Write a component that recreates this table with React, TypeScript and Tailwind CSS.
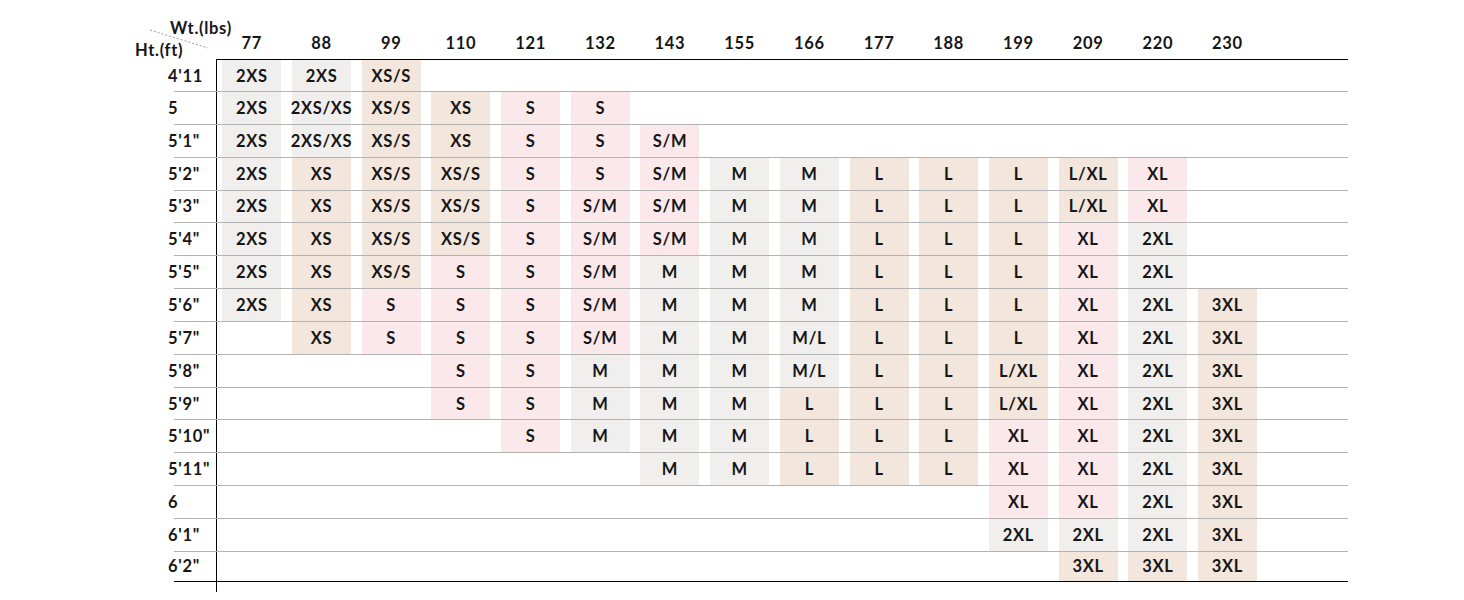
import React from 'react';

const weights = ['77', '88', '99', '110', '121', '132', '143', '155', '166', '177', '188', '199', '209', '220', '230'];

const rows: [string, string[]][] = [
  ["4'11", ['2XS', '2XS', 'XS/S']],
  ['5', ['2XS', '2XS/XS', 'XS/S', 'XS', 'S', 'S']],
  ['5\'1"', ['2XS', '2XS/XS', 'XS/S', 'XS', 'S', 'S', 'S/M']],
  ['5\'2"', ['2XS', 'XS', 'XS/S', 'XS/S', 'S', 'S', 'S/M', 'M', 'M', 'L', 'L', 'L', 'L/XL', 'XL']],
  ['5\'3"', ['2XS', 'XS', 'XS/S', 'XS/S', 'S', 'S/M', 'S/M', 'M', 'M', 'L', 'L', 'L', 'L/XL', 'XL']],
  ['5\'4"', ['2XS', 'XS', 'XS/S', 'XS/S', 'S', 'S/M', 'S/M', 'M', 'M', 'L', 'L', 'L', 'XL', '2XL']],
  ['5\'5"', ['2XS', 'XS', 'XS/S', 'S', 'S', 'S/M', 'M', 'M', 'M', 'L', 'L', 'L', 'XL', '2XL']],
  ['5\'6"', ['2XS', 'XS', 'S', 'S', 'S', 'S/M', 'M', 'M', 'M', 'L', 'L', 'L', 'XL', '2XL', '3XL']],
  ['5\'7"', ['', 'XS', 'S', 'S', 'S', 'S/M', 'M', 'M', 'M/L', 'L', 'L', 'L', 'XL', '2XL', '3XL']],
  ['5\'8"', ['', '', '', 'S', 'S', 'M', 'M', 'M', 'M/L', 'L', 'L', 'L/XL', 'XL', '2XL', '3XL']],
  ['5\'9"', ['', '', '', 'S', 'S', 'M', 'M', 'M', 'L', 'L', 'L', 'L/XL', 'XL', '2XL', '3XL']],
  ['5\'10"', ['', '', '', '', 'S', 'M', 'M', 'M', 'L', 'L', 'L', 'XL', 'XL', '2XL', '3XL']],
  ['5\'11"', ['', '', '', '', '', '', 'M', 'M', 'L', 'L', 'L', 'XL', 'XL', '2XL', '3XL']],
  ['6', ['', '', '', '', '', '', '', '', '', '', '', 'XL', 'XL', '2XL', '3XL']],
  ['6\'1"', ['', '', '', '', '', '', '', '', '', '', '', '2XL', '2XL', '2XL', '3XL']],
  ['6\'2"', ['', '', '', '', '', '', '', '', '', '', '', '', '3XL', '3XL', '3XL']],
];

const gray = ['2XS', '2XS/XS', 'M', 'M/L', '2XL'];
const pink = ['S', 'S/M', 'XL'];

function cellBg(size: string) {
  if (!size) return '';
  if (gray.includes(size)) return 'bg-[#f0efee]';
  if (pink.includes(size)) return 'bg-[#fbe8eb]';
  return 'bg-[#f3e6dd]';
}

function Row({ label, sizes, index }: { label: string; sizes: string[]; index: number }) {
  const last = index === rows.length - 1;
  const height = index === 0 ? 'h-[32px]' : last ? 'h-[30px]' : 'h-[32.85px]';
  return (
    <div className={`flex w-[1174px] border-b ${last ? 'border-black' : 'border-[#b3b3b3]'} ${height}`}>
      <div className="-ml-[6px] flex w-[48px] shrink-0 items-center whitespace-nowrap">{label}</div>
      <div className="flex h-full border-l border-black">
        {weights.map((w, i) => {
          const size = sizes[i] ?? '';
          return (
            <div key={w} className="flex h-full w-[69.7px] shrink-0 justify-center">
              <div className={`flex h-full w-[59px] items-center justify-center whitespace-nowrap ${cellBg(size)}`}>
                {size}
              </div>
            </div>
          );
        })}
      </div>
    </div>
  );
}

export default function App() {
  return (
    <div className="h-[600px] w-[1464px] overflow-hidden bg-white font-['Lato','Noto_Sans',sans-serif] text-[16.5px] font-bold leading-5 tracking-[0.7px] text-[#161616]">
      <div className="flex h-[59px]">
        <div className="relative flex w-[217px] shrink-0 flex-col pt-[18px]">
          <svg className="absolute left-[148px] top-[28px]" width="62" height="22" viewBox="0 0 62 22">
            <line x1="2" y1="2" x2="60" y2="20" stroke="#9a9a9a" strokeWidth="1" strokeDasharray="2 2" />
          </svg>
          <div className="h-5 whitespace-nowrap pl-[170px]">Wt.(lbs)</div>
          <div className="mt-[2px] h-5 whitespace-nowrap pl-[135px]">Ht.(ft)</div>
        </div>
        <div className="flex pt-[33px]">
          {weights.map((w) => (
            <div key={w} className="w-[69.7px] shrink-0 text-center">
              {w}
            </div>
          ))}
        </div>
      </div>
      <div className="ml-[216px] h-px w-[1132px] bg-black" />
      <div className="pl-[174px]">
        {rows.map(([label, sizes], i) => (
          <Row key={label} label={label} sizes={sizes} index={i} />
        ))}
        <div className="ml-[42px] h-[10px] border-l border-black" />
      </div>
    </div>
  );
}
